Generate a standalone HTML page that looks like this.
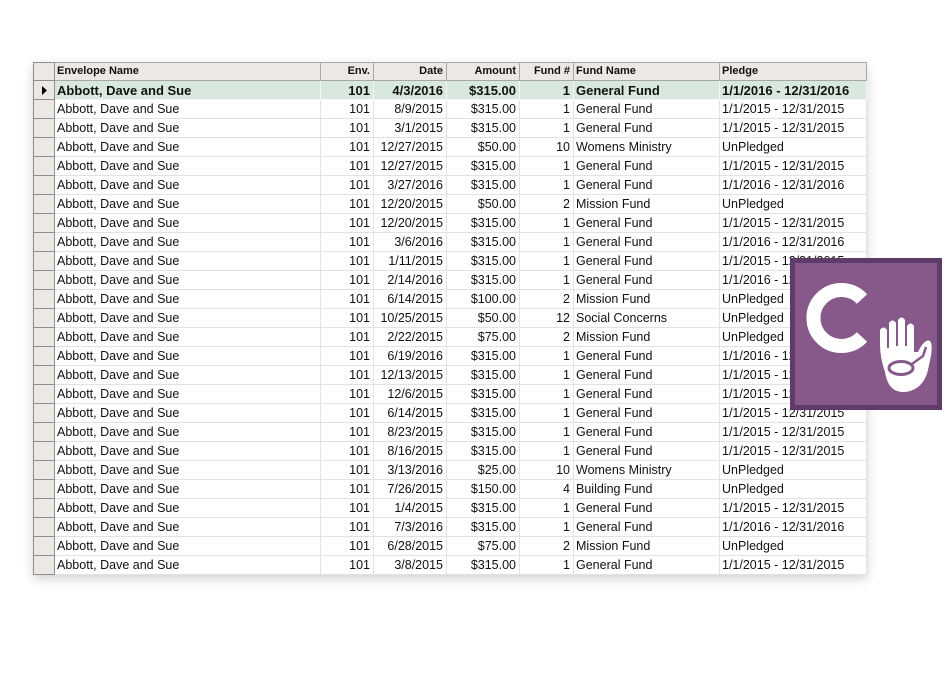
<!DOCTYPE html>
<html><head><meta charset="utf-8">
<style>
html,body{margin:0;padding:0;background:#fff;width:947px;height:673px;overflow:hidden}
#g{position:absolute;left:33px;top:62px;box-shadow:0 4px 10px rgba(0,0,0,0.18);background:#fff}
table{border-collapse:collapse;font-family:"Liberation Sans",Arial,sans-serif;font-size:12.5px;color:#111;table-layout:fixed}
td,th{height:18px;padding:0 3px 0 2px;border:1px solid #e2e2e2;white-space:nowrap;overflow:hidden;line-height:18px;vertical-align:middle;box-sizing:border-box}
tr{height:19px}
tr.hd{height:18px}
th{height:17px;background:#ece9e4;font-size:11px;font-weight:bold;text-align:left;border:1px solid #a8a8a8;line-height:15px}
td.h,th.h{background:#ece9e4;border:1px solid #8e8e8e;padding:0}
td.h svg{display:block}
.r{text-align:right}
tr.sel td{background:#d8e8dc;font-weight:bold;font-size:13px;border-color:#f4f8f5;line-height:17px}
tr.sel td.h{background:#ece9e4;border-color:#8e8e8e}
</style></head><body>
<div id="g"><table>
<colgroup><col style="width:21px"><col style="width:266px"><col style="width:53px"><col style="width:73px"><col style="width:73px"><col style="width:54px"><col style="width:146px"><col style="width:147px"></colgroup>
<tr class="hd"><th class="h"></th><th>Envelope Name</th><th class="r">Env.</th><th class="r">Date</th><th class="r">Amount</th><th class="r">Fund #</th><th>Fund Name</th><th>Pledge</th></tr>
<tr class="sel"><td class="h"><svg width="20" height="17"><path d="M8 4 L13 8.5 L8 13Z" fill="#000"/></svg></td><td>Abbott, Dave and Sue</td><td class="r">101</td><td class="r">4/3/2016</td><td class="r">$315.00</td><td class="r">1</td><td>General Fund</td><td>1/1/2016 - 12/31/2016</td></tr>
<tr><td class="h"></td><td>Abbott, Dave and Sue</td><td class="r">101</td><td class="r">8/9/2015</td><td class="r">$315.00</td><td class="r">1</td><td>General Fund</td><td>1/1/2015 - 12/31/2015</td></tr>
<tr><td class="h"></td><td>Abbott, Dave and Sue</td><td class="r">101</td><td class="r">3/1/2015</td><td class="r">$315.00</td><td class="r">1</td><td>General Fund</td><td>1/1/2015 - 12/31/2015</td></tr>
<tr><td class="h"></td><td>Abbott, Dave and Sue</td><td class="r">101</td><td class="r">12/27/2015</td><td class="r">$50.00</td><td class="r">10</td><td>Womens Ministry</td><td>UnPledged</td></tr>
<tr><td class="h"></td><td>Abbott, Dave and Sue</td><td class="r">101</td><td class="r">12/27/2015</td><td class="r">$315.00</td><td class="r">1</td><td>General Fund</td><td>1/1/2015 - 12/31/2015</td></tr>
<tr><td class="h"></td><td>Abbott, Dave and Sue</td><td class="r">101</td><td class="r">3/27/2016</td><td class="r">$315.00</td><td class="r">1</td><td>General Fund</td><td>1/1/2016 - 12/31/2016</td></tr>
<tr><td class="h"></td><td>Abbott, Dave and Sue</td><td class="r">101</td><td class="r">12/20/2015</td><td class="r">$50.00</td><td class="r">2</td><td>Mission Fund</td><td>UnPledged</td></tr>
<tr><td class="h"></td><td>Abbott, Dave and Sue</td><td class="r">101</td><td class="r">12/20/2015</td><td class="r">$315.00</td><td class="r">1</td><td>General Fund</td><td>1/1/2015 - 12/31/2015</td></tr>
<tr><td class="h"></td><td>Abbott, Dave and Sue</td><td class="r">101</td><td class="r">3/6/2016</td><td class="r">$315.00</td><td class="r">1</td><td>General Fund</td><td>1/1/2016 - 12/31/2016</td></tr>
<tr><td class="h"></td><td>Abbott, Dave and Sue</td><td class="r">101</td><td class="r">1/11/2015</td><td class="r">$315.00</td><td class="r">1</td><td>General Fund</td><td>1/1/2015 - 12/31/2015</td></tr>
<tr><td class="h"></td><td>Abbott, Dave and Sue</td><td class="r">101</td><td class="r">2/14/2016</td><td class="r">$315.00</td><td class="r">1</td><td>General Fund</td><td>1/1/2016 - 12/31/2016</td></tr>
<tr><td class="h"></td><td>Abbott, Dave and Sue</td><td class="r">101</td><td class="r">6/14/2015</td><td class="r">$100.00</td><td class="r">2</td><td>Mission Fund</td><td>UnPledged</td></tr>
<tr><td class="h"></td><td>Abbott, Dave and Sue</td><td class="r">101</td><td class="r">10/25/2015</td><td class="r">$50.00</td><td class="r">12</td><td>Social Concerns</td><td>UnPledged</td></tr>
<tr><td class="h"></td><td>Abbott, Dave and Sue</td><td class="r">101</td><td class="r">2/22/2015</td><td class="r">$75.00</td><td class="r">2</td><td>Mission Fund</td><td>UnPledged</td></tr>
<tr><td class="h"></td><td>Abbott, Dave and Sue</td><td class="r">101</td><td class="r">6/19/2016</td><td class="r">$315.00</td><td class="r">1</td><td>General Fund</td><td>1/1/2016 - 12/31/2016</td></tr>
<tr><td class="h"></td><td>Abbott, Dave and Sue</td><td class="r">101</td><td class="r">12/13/2015</td><td class="r">$315.00</td><td class="r">1</td><td>General Fund</td><td>1/1/2015 - 12/31/2015</td></tr>
<tr><td class="h"></td><td>Abbott, Dave and Sue</td><td class="r">101</td><td class="r">12/6/2015</td><td class="r">$315.00</td><td class="r">1</td><td>General Fund</td><td>1/1/2015 - 12/31/2015</td></tr>
<tr><td class="h"></td><td>Abbott, Dave and Sue</td><td class="r">101</td><td class="r">6/14/2015</td><td class="r">$315.00</td><td class="r">1</td><td>General Fund</td><td>1/1/2015 - 12/31/2015</td></tr>
<tr><td class="h"></td><td>Abbott, Dave and Sue</td><td class="r">101</td><td class="r">8/23/2015</td><td class="r">$315.00</td><td class="r">1</td><td>General Fund</td><td>1/1/2015 - 12/31/2015</td></tr>
<tr><td class="h"></td><td>Abbott, Dave and Sue</td><td class="r">101</td><td class="r">8/16/2015</td><td class="r">$315.00</td><td class="r">1</td><td>General Fund</td><td>1/1/2015 - 12/31/2015</td></tr>
<tr><td class="h"></td><td>Abbott, Dave and Sue</td><td class="r">101</td><td class="r">3/13/2016</td><td class="r">$25.00</td><td class="r">10</td><td>Womens Ministry</td><td>UnPledged</td></tr>
<tr><td class="h"></td><td>Abbott, Dave and Sue</td><td class="r">101</td><td class="r">7/26/2015</td><td class="r">$150.00</td><td class="r">4</td><td>Building Fund</td><td>UnPledged</td></tr>
<tr><td class="h"></td><td>Abbott, Dave and Sue</td><td class="r">101</td><td class="r">1/4/2015</td><td class="r">$315.00</td><td class="r">1</td><td>General Fund</td><td>1/1/2015 - 12/31/2015</td></tr>
<tr><td class="h"></td><td>Abbott, Dave and Sue</td><td class="r">101</td><td class="r">7/3/2016</td><td class="r">$315.00</td><td class="r">1</td><td>General Fund</td><td>1/1/2016 - 12/31/2016</td></tr>
<tr><td class="h"></td><td>Abbott, Dave and Sue</td><td class="r">101</td><td class="r">6/28/2015</td><td class="r">$75.00</td><td class="r">2</td><td>Mission Fund</td><td>UnPledged</td></tr>
<tr><td class="h"></td><td>Abbott, Dave and Sue</td><td class="r">101</td><td class="r">3/8/2015</td><td class="r">$315.00</td><td class="r">1</td><td>General Fund</td><td>1/1/2015 - 12/31/2015</td></tr>
</table></div>
<svg style="position:absolute;left:790px;top:258px" width="152" height="152" viewBox="0 0 152 152">
<rect x="0" y="0" width="152" height="152" fill="#5e3b6b"/>
<rect x="5" y="5" width="142" height="142" fill="#87598a"/>
<path d="M72 41 A28 28 0 1 0 72 79" fill="none" stroke="#fff" stroke-width="14"/>
<path d="M95 114 C91 102 90 94 90 84 L90 72 Q93.5 67 97 72 L97 90 L99 90 L99 65 Q102.5 60 106 65 L106 88 L108 88 L108 62 Q111.5 57 115 62 L115 88 L117 88 L117 68 Q120.5 63 124 68 L124 94 L128 94 C132 86 136 81 140 83 C144 88 140 102 138 112 C135 126 125 134 113 134 C102 134 97 126 95 114Z" fill="#fff"/>
<ellipse cx="111" cy="110" rx="12" ry="6.5" fill="none" stroke="#87598a" stroke-width="3"/>
<path d="M122 106 L133 98 L136 89" fill="none" stroke="#87598a" stroke-width="2.5"/>
</svg>
</body></html>
